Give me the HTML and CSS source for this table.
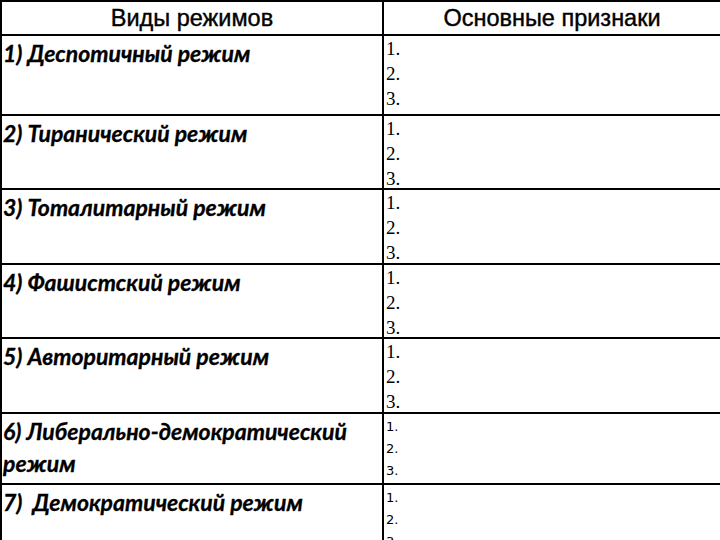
FILE: index.html
```html
<!DOCTYPE html>
<html lang="ru">
<head>
<meta charset="utf-8">
<link rel="stylesheet" href="styles.css">
</head>
<body>
<div class="table">
  <div class="cell head left">Виды режимов</div>
  <div class="cell head right">Основные признаки</div>

  <div class="cell name r1">1) Деспотичный режим</div>
  <div class="cell nums r1"><div>1.</div><div>2.</div><div>3.</div></div>

  <div class="cell name r2">2) Тиранический режим</div>
  <div class="cell nums r2"><div>1.</div><div>2.</div><div>3.</div></div>

  <div class="cell name r3">3) Тоталитарный режим</div>
  <div class="cell nums r3"><div>1.</div><div>2.</div><div>3.</div></div>

  <div class="cell name r4">4) Фашистский режим</div>
  <div class="cell nums r4"><div>1.</div><div>2.</div><div>3.</div></div>

  <div class="cell name r5">5) Авторитарный режим</div>
  <div class="cell nums r5"><div>1.</div><div>2.</div><div>3.</div></div>

  <div class="cell name r6">6) Либерально-демократический режим</div>
  <div class="cell nums small r6"><div>1.</div><div>2.</div><div>3.</div></div>

  <div class="cell name r7 last">7)&nbsp; Демократический режим</div>
  <div class="cell nums small r7 last"><div>1.</div><div>2.</div><div>3.</div></div>
</div>
</body>
</html>
```

FILE: styles.css
```css
html, body {
  margin: 0;
  padding: 0;
  background: #ffffff;
  width: 720px;
  height: 540px;
  overflow: hidden;
}

.table {
  display: grid;
  grid-template-columns: 382px 1fr;
  grid-template-rows: 34px 80px 74px 75px 74px 75px 71px 80px;
  border-top: 2px solid #000;
  border-left: 2px solid #000;
  box-sizing: border-box;
  width: 720px;
  color: #000;
}

.cell {
  border-bottom: 2px solid #000;
  box-sizing: border-box;
  overflow: hidden;
}

.cell.last {
  border-bottom: none;
}

.left, .name {
  border-right: 2px solid #000;
}

.head {
  font-family: "Liberation Sans", Arial, sans-serif;
  font-size: 23.5px;
  text-align: center;
  line-height: 32px;
  color: #000;
  -webkit-text-stroke: 0.4px #000;
}

.name {
  font-family: Lato, "Liberation Sans", sans-serif;
  font-weight: 700;
  font-style: italic;
  font-size: 23px;
  line-height: 32px;
  padding: 1px 20px 0 1px;
  color: #000;
  -webkit-text-stroke: 0.3px #000;
}

.nums {
  font-family: "Liberation Serif", "Times New Roman", serif;
  font-size: 19px;
  line-height: 25px;
  padding: 0 0 0 2px;
}

.nums.small {
  font-family: "DejaVu Sans", Verdana, sans-serif;
  font-size: 13px;
  line-height: 22px;
  padding-top: 2px;
}
```
